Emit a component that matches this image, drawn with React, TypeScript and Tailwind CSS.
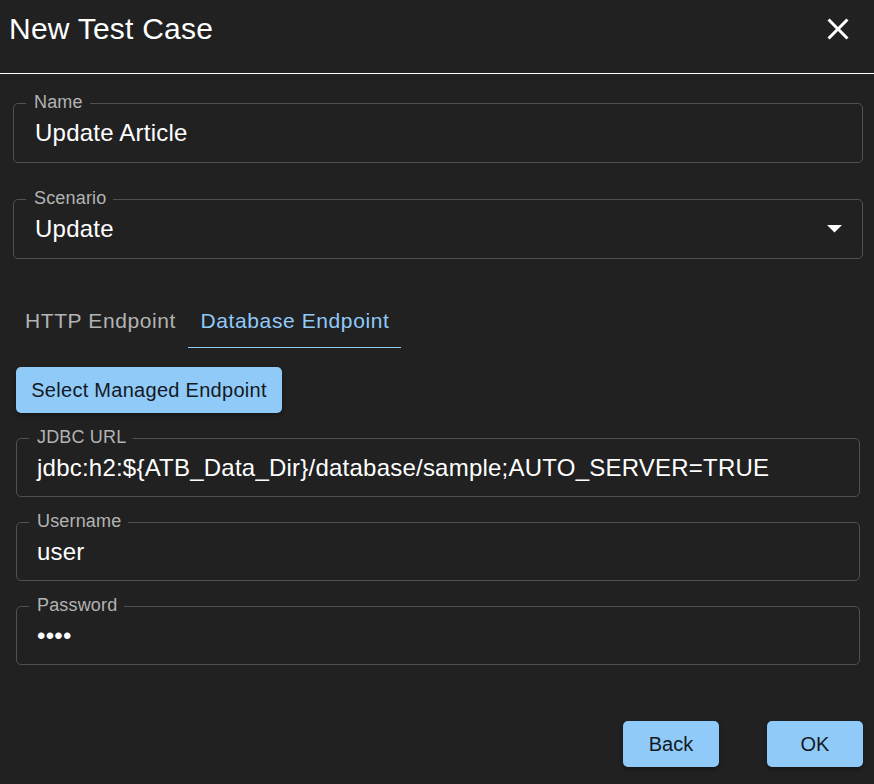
interface OutlinedFieldProps {
  label: string;
  value: string;
  className: string;
  valueClassName?: string;
  select?: boolean;
}

function OutlinedField({ label, value, className, valueClassName = 'ml-[20px]', select }: OutlinedFieldProps) {
  return (
    <fieldset className={`border border-[#515151] rounded-[5px] ${className}`}>
      <legend className="ml-[12px] px-[8px] pr-[7px] h-[20px] text-[18px] leading-[18px] tracking-[0.17px] text-[#b3b3b3] whitespace-nowrap">{label}</legend>
      <div className="h-[40px] flex items-center">
        <span className={`text-[24px] leading-[28px] tracking-[0.225px] text-white whitespace-nowrap ${valueClassName}`}>{value}</span>
        {select && (
          <svg className="ml-auto mr-[20px]" width="15" height="8" viewBox="0 0 15 8">
            <path d="M0 0H15L7.5 7.5Z" fill="#ffffff" />
          </svg>
        )}
      </div>
    </fieldset>
  );
}

export default function App() {
  return (
    <div className="w-[874px] h-[784px] bg-[#212121] text-white font-['Liberation_Sans',Arial,sans-serif] flex flex-col overflow-hidden">
      <header className="h-[73px] flex items-start justify-between pl-[9px] pr-[18px] pt-[11px]">
        <h1 className="text-[30px] leading-[36px] tracking-[0.225px] font-normal">New Test Case</h1>
        <svg width="36" height="36" viewBox="0 0 24 24" fill="#ffffff">
          <path d="M19 6.41 17.59 5 12 10.59 6.41 5 5 6.41 10.59 12 5 17.59 6.41 19 12 13.41 17.59 19 19 17.59 13.41 12z" />
        </svg>
      </header>
      <div className="h-px bg-white shrink-0" />

      <div className="flex flex-col pl-[13px] pr-[11px] pt-[19px] gap-[26px]">
        <OutlinedField label="Name" value="Update Article" className="h-[70px]" valueClassName="ml-[21px]" />
        <OutlinedField label="Scenario" value="Update" className="h-[70px]" valueClassName="ml-[21px]" select />
      </div>

      <nav className="flex ml-[12px] mt-[31px] h-[58px] text-[21px] tracking-[0.6px]">
        <span className="w-[176px] flex items-center justify-center pt-[4px] pl-[1px] text-[#b3b3b3]">HTTP Endpoint</span>
        <span className="w-[213px] flex items-center justify-center pt-[4px] pl-[1px] text-[#90caf9] border-b border-[#90caf9]">Database Endpoint</span>
      </nav>

      <div className="flex flex-col pl-[16px] pr-[14px]">
        <button className="mt-[19px] self-start w-[266px] h-[46px] rounded-[5px] bg-[#90caf9] text-[#14191f] text-[20px] tracking-[0.28px] shadow-[0_2px_4px_rgba(0,0,0,0.35)]">
          Select Managed Endpoint
        </button>
        <div className="flex flex-col mt-[15px] gap-[15px]">
          <OutlinedField label="JDBC URL" value="jdbc:h2:${ATB_Data_Dir}/database/sample;AUTO_SERVER=TRUE" className="h-[69px]" />
          <OutlinedField label="Username" value="user" className="h-[69px]" />
          <OutlinedField label="Password" value="••••" className="h-[69px]" />
        </div>
      </div>

      <footer className="flex justify-end gap-[48px] pr-[11px] mt-[56px]">
        <button className="w-[96px] h-[46px] rounded-[5px] bg-[#90caf9] text-[#14191f] text-[20px] shadow-[0_2px_4px_rgba(0,0,0,0.35)]">Back</button>
        <button className="w-[96px] h-[46px] rounded-[5px] bg-[#90caf9] text-[#14191f] text-[20px] shadow-[0_2px_4px_rgba(0,0,0,0.35)]">OK</button>
      </footer>
    </div>
  );
}
